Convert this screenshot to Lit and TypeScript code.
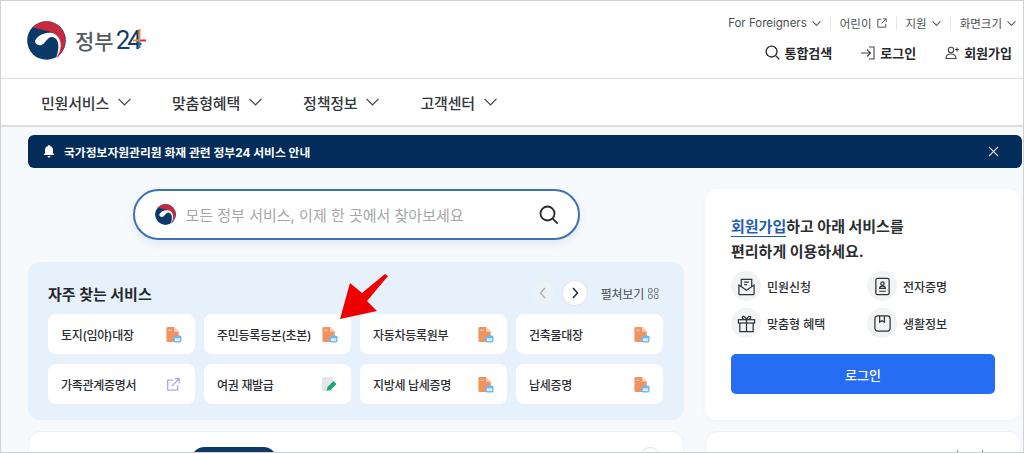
import { LitElement, html, css, svg } from "lit";
import { customElement } from "lit/decorators.js";

const chevron = (w = 9, c = "#555", sw = 1.1) => html`<svg width=${w} height=${Math.round(w * 0.6)} viewBox="0 0 12 7" fill="none" stroke=${c} stroke-width=${sw * 12 / w}><path d="M.5 .6 6 6.200 11.500 .6"/></svg>`;

const taegeuk = (size: number) => html`<svg width=${size} height=${size} viewBox="0 0 40 40">
  <circle cx="20" cy="20" r="19.800" fill="#0b3a68"/>
  <path d="M6 6.500C13 -1 26 -1.500 33.500 6 41.500 14 41.500 28 30 38.500 36 27 35.500 16 27 12.500 20 9 12 9 6 6.500Z" fill="#c8293f"/>
  <path d="M8 21C10 15 19 10.500 27 12.500 35 16 38 27 29.500 38.500 34 28 33 18 26.500 16.500 21 15.500 20 22 15 24.500 12 25.500 9 24 8 21Z" fill="#fff"/>
</svg>`;

const docIcon = html`<svg class="tile-icon" width="17" height="17" viewBox="1 0 17 18">
  <path d="M2 2.500A1.500 1.500 0 0 1 3.500 1H10l5 5v9.500a1.500 1.500 0 0 1-1.500 1.500h-10A1.500 1.500 0 0 1 2 15.500Z" fill="#f0935f"/>
  <path d="M10 1l5 5h-5Z" fill="#f9cdb4"/>
  <path d="M4 4.500h3.500" stroke="#fbd8c4" stroke-width="1"/>
  <rect x="9.500" y="10" width="8.500" height="7.500" rx="2" fill="#6fb8f2"/>
  <rect x="11" y="13" width="5.500" height="3" fill="#dceffc"/>
</svg>`;

const linkIcon = html`<svg class="tile-icon link" width="13" height="13" viewBox="0 0 13 13" fill="none" stroke="#b3a4ee" stroke-width="1.300">
  <path d="M6 2.200H.7v10h10V7"/><path d="M5 8 12 1M7.800 .7h4.500v4.500"/>
</svg>`;

const editIcon = html`<svg class="tile-icon edit" width="15" height="15" viewBox="0 0 15 15">
  <rect x="0" y="0" width="11" height="14" rx="1.500" fill="#e3e7ea"/>
  <path d="M4.500 13.800 5.500 10l6-6 3 3-6 6Z" fill="#19a87a"/>
</svg>`;

const items: [string, unknown][] = [
  ["토지(임야)대장", docIcon],
  ["주민등록등본(초본)", docIcon],
  ["자동차등록원부", docIcon],
  ["건축물대장", docIcon],
  ["가족관계증명서", linkIcon],
  ["여권 재발급", editIcon],
  ["지방세 납세증명", docIcon],
  ["납세증명", docIcon],
];

const perk = (p: unknown) => html`<svg width="19" height="19" viewBox="0 0 20 20" fill="none" stroke="#333" stroke-width="1.300">${p}</svg>`;
const perks: [string, unknown][] = [
  ["민원신청", perk(svg`<path d="M2 8.500 10 14l8-5.500v9a1 1 0 0 1-1 1H3a1 1 0 0 1-1-1Z"/><path d="M4.500 10V2.500h11V10M7.500 5.500h5M7.500 8h3"/>`)],
  ["전자증명", perk(svg`<rect x="3" y="1.500" width="14" height="17" rx="2"/><circle cx="10" cy="7" r="1.800"/><path d="M7 12c0-1.500 1-2.300 3-2.300s3 .8 3 2.300ZM6.500 15h7"/>`)],
  ["맞춤형 혜택", perk(svg`<rect x="1.500" y="6" width="17" height="3.500"/><path d="M3 9.500V18.500h14V9.500M10 6v12.500M10 6C7 6 5.500 5 5.500 3.500S8.500 1.500 10 6ZM10 6c3 0 4.500-1 4.500-2.500S11.500 1.500 10 6Z"/>`)],
  ["생활정보", perk(svg`<rect x="2" y="2" width="16" height="16" rx="3"/><path d="M7 2v6.500L9.500 7 12 8.500V2"/>`)],
];

@customElement("app-root")
export class AppRoot extends LitElement {
  static styles = css`
    :host {
      display: block;
      position: relative;
      width: 1024px;
      height: 453px;
      box-sizing: border-box;
      overflow: hidden;
      border: 1px solid #cfd1d4;
      background: #f7fafd;
      color: #222;
      font-family: Inter, "Noto Sans CJK KR", "Noto Sans", sans-serif;
    }
    svg { display: block; flex: none; }
    .header {
      height: 77px;
      background: #fff;
      border-bottom: 1px solid #dcdee1;
      display: flex;
      justify-content: space-between;
      padding: 0 7px 0 26px;
    }
    .logo { display: flex; align-items: center; gap: 9px; margin-top: 2px; }
    .wordmark {
      position: relative;
      display: flex;
      align-items: baseline;
      font-size: 21px;
      font-weight: 500;
      line-height: 26px;
      color: #565b62;
      padding-right: 7px;
    }
    .wordmark b { font-family: Roboto, sans-serif; font-weight: 400; font-size: 26px; color: #123e6b; letter-spacing: -3px; margin-left: 2px; }
    .plus { position: absolute; right: 0; top: 2px; }
    .right { display: flex; flex-direction: column; align-items: flex-end; padding-top: 13px; }
    .util { display: flex; align-items: center; font-size: 11.500px; color: #4b4f54; height: 18px; }
    .util span { display: flex; align-items: center; gap: 5px; }
    .util i { width: 1px; height: 14px; background: #e3e5e8; margin: 0 9px; }
    .actions { display: flex; align-items: center; gap: 29px; margin: 11px 4px 0 0; font-size: 13px; font-weight: 700; color: #26282b; }
    .actions span { display: flex; align-items: center; gap: 4px; }
    .nav {
      height: 46px;
      background: #fff;
      border-bottom: 2px solid #dcdee1;
      display: flex;
      align-items: center;
      gap: 41px;
      padding-left: 40px;
      font-size: 15px;
      font-weight: 500;
      letter-spacing: -0.2px;
      color: #33363a;
    }
    .nav span { display: flex; align-items: center; gap: 9px; }
    .main { padding: 8px 1px 0 27px; }
    .notice {
      height: 33px;
      background: #042c5a;
      border-radius: 6px;
      display: flex;
      align-items: center;
      justify-content: space-between;
      padding: 0 23px 0 15px;
      color: #fff;
      font-size: 11.800px;
      font-weight: 700;
    }
    .notice span { display: flex; align-items: center; gap: 9px; }
    .cols { display: grid; grid-template-columns: 656px 316px; gap: 21px; margin-top: 21px; }
    .left { display: flex; flex-direction: column; }
    .search {
      align-self: center;
      width: 447px;
      height: 51px;
      box-sizing: border-box;
      border: 2px solid #3f71b3;
      border-radius: 26px;
      background: #fff;
      box-shadow: 0 4px 10px rgba(60, 110, 180, 0.12);
      display: flex;
      align-items: center;
      gap: 10px;
      padding: 0 19px 0 20px;
      font-size: 15px;
      color: #a3a6aa;
    }
    .search .ph { flex: 1; }
    .freq {
      margin-top: 22px;
      height: 158px;
      box-sizing: border-box;
      background: #e6f1fc;
      border-radius: 12px;
      padding: 14px 21px 0 20px;
    }
    .freq-head { display: flex; align-items: center; height: 34px; margin-bottom: 4px; }
    .freq-head h2 { flex: 1; margin: 0; font-size: 15px; font-weight: 700; color: #26282b; }
    .round { border-radius: 50%; display: flex; align-items: center; justify-content: center; }
    .prev { width: 22px; height: 22px; background: #edf2f7; }
    .next { width: 26px; height: 26px; background: #fff; margin-left: 8px; border: 1px solid #e0e5ea; box-sizing: border-box; }
    .expand { display: flex; align-items: center; gap: 4px; margin-left: 13px; margin-right: 4px; font-size: 12px; letter-spacing: -0.2px; color: #4b4f54; }
    .tiles { display: grid; grid-template-columns: repeat(4, 147px); gap: 10px 9px; }
    .tile {
      height: 40px;
      box-sizing: border-box;
      background: #fff;
      border-radius: 8px;
      display: flex;
      align-items: center;
      justify-content: space-between;
      padding: 0 13px 0 13px;
      font-size: 12px;
      font-weight: 500;
      letter-spacing: -0.3px;
      color: #2b2e32;
    }
    .tile-icon.link { margin-right: 2px; }
    .tile-icon.edit { margin-right: 1px; }
    .stub {
      margin-top: 11px;
      height: 60px;
      background: #fff;
      border: 1px solid #eef0f3;
      box-sizing: border-box;
      border-radius: 12px;
      display: flex;
      justify-content: space-between;
      padding: 15px 22px 0 161px;
    }
    .pill { width: 88px; height: 30px; border-radius: 15px; background: #0b3a68; }
    .stub .round { width: 22px; height: 22px; border: 1px solid #dfe3e8; box-sizing: border-box; }
    .side { display: flex; flex-direction: column; }
    .member {
      height: 231px;
      box-sizing: border-box;
      background: #fff;
      border-radius: 12px;
      box-shadow: 0 1px 5px rgba(40, 60, 90, 0.05);
      padding: 25px 26px 0;
    }
    .member p { margin: 0; font-size: 15px; font-weight: 700; line-height: 25px; color: #2b2e32; }
    .member a { color: #1f5fb0; border-bottom: 1px solid #1f5fb0; }
    .perks { display: grid; grid-template-columns: 136px 1fr; row-gap: 7px; margin-top: 7px; }
    .perk { display: flex; align-items: center; gap: 6px; font-size: 12px; font-weight: 500; color: #2b2e32; }
    .perk div { width: 30px; height: 30px; border-radius: 50%; background: #f1f3f5; display: flex; align-items: center; justify-content: center; }
    .login {
      margin-top: 16px;
      height: 40px;
      border-radius: 5px;
      background: #256ef4;
      color: #fff;
      font-size: 13px;
      font-weight: 500;
      display: flex;
      align-items: center;
      justify-content: center;
    }
    .stub2 {
      margin-top: 11px;
      height: 60px;
      background: #fff;
      border: 1px solid #eef0f3;
      box-sizing: border-box;
      border-radius: 12px;
      display: flex;
      justify-content: flex-end;
      gap: 24px;
      padding: 18px 37px 0 0;
    }
    .stub2 i { width: 1px; height: 3px; background: #8b8f94; }
    .arrow { position: absolute; left: -1px; top: -1px; pointer-events: none; }
  `;

  render() {
    return html`
      <div class="header">
        <div class="logo">
          ${taegeuk(39)}
          <div class="wordmark">정부<b>24</b>
            <svg class="plus" width="13" height="19" viewBox="0 0 13 19">
              <path d="M0 11.500h7" stroke="#ef8a2c" stroke-width="2"/>
              <path d="M7 11.500h6" stroke="#d5283f" stroke-width="2"/>
              <path d="M6.500 0v10.500" stroke="#ef8a2c" stroke-width="2"/>
              <path d="M6.500 12.500V19" stroke="#1f86c4" stroke-width="2"/>
            </svg>
          </div>
        </div>
        <div class="right">
          <div class="util">
            <span>For Foreigners ${chevron()}</span><i></i>
            <span>어린이
              <svg width="10" height="10" viewBox="0 0 12 12" fill="none" stroke="#555" stroke-width="1.200"><path d="M5 1.500H1v9.500h9.500V7"/><path d="M5.500 6.500 11 1M7.500 1H11v3.500"/></svg>
            </span><i></i>
            <span>지원 ${chevron()}</span><i></i>
            <span>화면크기 ${chevron()}</span>
          </div>
          <div class="actions">
            <span><svg width="15" height="15" viewBox="0 0 16 16" fill="none" stroke="#26282b" stroke-width="1.400"><circle cx="7" cy="7" r="5.800"/><path d="m11.200 11.200 4 4"/></svg>통합검색</span>
            <span><svg width="15" height="14" viewBox="0 0 15 14" fill="none" stroke="#444" stroke-width="1.100"><path d="M0 7h9M6 3.500 9.500 7 6 10.500M8 1h5v12H8"/></svg>로그인</span>
            <span><svg width="15" height="14" viewBox="0 0 15 14" fill="none" stroke="#444" stroke-width="1.100"><circle cx="6" cy="4" r="2.700"/><path d="M1 12.500c0-3 2-4.500 5-4.500s5 1.500 5 4.500ZM12 1.500v4M10 3.500h4"/></svg>회원가입</span>
          </div>
        </div>
      </div>
      <div class="nav">
        ${["민원서비스", "맞춤형혜택", "정책정보", "고객센터"].map((t) => html`<span>${t} ${chevron(13, "#444", 1.3)}</span>`)}
      </div>
      <div class="main">
        <div class="notice">
          <span>
            <svg width="12" height="13" viewBox="0 0 12 13" fill="#fff"><path d="M6 0a1 1 0 0 1 1 1c2 .5 3 2 3 4v3l1.500 2H.5L2 8V5c0-2 1-3.500 3-4a1 1 0 0 1 1-1ZM4.500 11h3a1.500 1.500 0 0 1-3 0Z"/></svg>
            국가정보자원관리원 화재 관련 정부24 서비스 안내
          </span>
          <svg width="11" height="11" viewBox="0 0 11 11" fill="none" stroke="#cfd9e5" stroke-width="1.100"><path d="m1 1 9 9M10 1l-9 9"/></svg>
        </div>
        <div class="cols">
          <div class="left">
            <div class="search">
              ${taegeuk(21)}
              <span class="ph">모든 정부 서비스, 이제 한 곳에서 찾아보세요</span>
              <svg width="20" height="20" viewBox="0 0 20 20" fill="none" stroke="#26282b" stroke-width="1.800"><circle cx="8.500" cy="8.500" r="7"/><path d="m13.700 13.700 5 5"/></svg>
            </div>
            <div class="freq">
              <div class="freq-head">
                <h2>자주 찾는 서비스</h2>
                <div class="round prev"><svg width="10" height="12" viewBox="0 0 10 12" fill="none" stroke="#a9b0b8" stroke-width="1.400"><path d="M7 1 2.500 6 7 11"/></svg></div>
                <div class="round next"><svg width="10" height="12" viewBox="0 0 10 12" fill="none" stroke="#26282b" stroke-width="1.500"><path d="m3 1 4.500 5L3 11"/></svg></div>
                <div class="expand">펼쳐보기
                  <svg width="11" height="11" viewBox="0 0 12 12" fill="none" stroke="#666" stroke-width="1"><rect x=".5" y=".5" width="4" height="4.500" rx="1.500"/><rect x="7" y=".5" width="4" height="4.500" rx="1.500"/><rect x=".5" y="7" width="4" height="4.500" rx="1"/><rect x="7" y="7" width="4" height="4.500" rx="1"/></svg>
                </div>
              </div>
              <div class="tiles">
                ${items.map(([t, i]) => html`<div class="tile"><span>${t}</span>${i}</div>`)}
              </div>
            </div>
            <div class="stub">
              <div class="pill"></div>
              <div class="round"></div>
            </div>
          </div>
          <div class="side">
            <div class="member">
              <p><a>회원가입</a>하고 아래 서비스를<br />편리하게 이용하세요.</p>
              <div class="perks">
                ${perks.map(([t, i]) => html`<div class="perk"><div>${i}</div>${t}</div>`)}
              </div>
              <div class="login">로그인</div>
            </div>
            <div class="stub2"><i></i><i></i></div>
          </div>
        </div>
      </div>
      <svg class="arrow" width="1024" height="453" viewBox="0 0 1024 453">
        <polygon points="340,319 350,283 362,293 385,274 388,276 367,301 377,311" fill="#ee0000"/>
      </svg>
    `;
  }
}
